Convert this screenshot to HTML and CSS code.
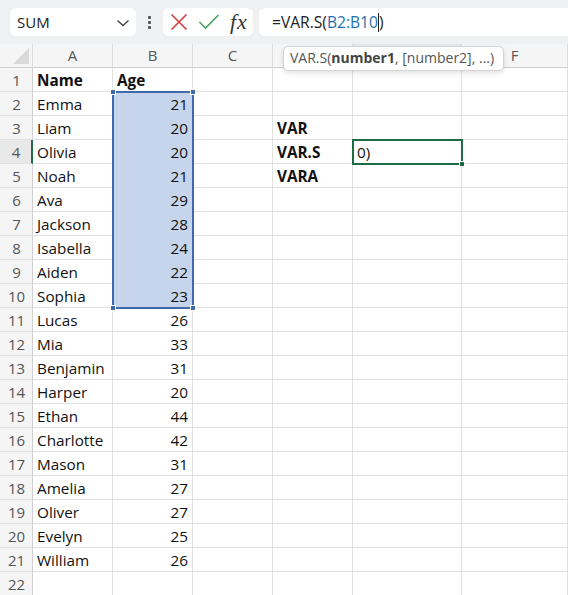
FILE: index.html
```html
<!DOCTYPE html>
<html>
<head>
<meta charset="utf-8">
<link rel="stylesheet" href="styles.css">
</head>
<body>
<div class="toolbar">
  <div class="namebox"><span class="nb-text">SUM</span>
    <svg class="chev" width="14" height="8" viewBox="0 0 14 8"><path d="M1.5 1.5 L7 6.5 L12.5 1.5" fill="none" stroke="#444" stroke-width="1.4"/></svg>
  </div>
  <div class="dots"><span></span><span></span><span></span></div>
  <div class="fxbox">
    <svg class="ico" width="18" height="18" viewBox="0 0 18 18"><path d="M1.5 1.5 L16.5 16.5 M16.5 1.5 L1.5 16.5" stroke="#d83b3b" stroke-width="1.6" fill="none"/></svg>
    <svg class="ico" width="22" height="18" viewBox="0 0 22 18"><path d="M1.5 9 L7.5 15 L20.5 2" stroke="#48a061" stroke-width="1.6" fill="none"/></svg>
    <span class="fx">fx</span>
  </div>
  <div class="formula"><span>=VAR.S(</span><span class="ref">B2:B10</span><span class="caret"></span><span>)</span></div>
</div>
<div class="sheet">
  <div class="grid">
    <div class="corner"></div><div class="ch">A</div><div class="ch">B</div><div class="ch">C</div><div class="ch"></div><div class="ch act"></div><div class="ch">F</div>

    <div class="rh">1</div><div class="c b">Name</div><div class="c b">Age</div><div class="c"></div><div class="c"></div><div class="c"></div><div class="c"></div>
    <div class="rh">2</div><div class="c">Emma</div><div class="c n sel">21</div><div class="c"></div><div class="c"></div><div class="c"></div><div class="c"></div>
    <div class="rh">3</div><div class="c">Liam</div><div class="c n sel">20</div><div class="c"></div><div class="c b">VAR</div><div class="c"></div><div class="c"></div>
    <div class="rh act">4</div><div class="c">Olivia</div><div class="c n sel">20</div><div class="c"></div><div class="c b">VAR.S</div><div class="c">0)</div><div class="c"></div>
    <div class="rh">5</div><div class="c">Noah</div><div class="c n sel">21</div><div class="c"></div><div class="c b">VARA</div><div class="c"></div><div class="c"></div>
    <div class="rh">6</div><div class="c">Ava</div><div class="c n sel">29</div><div class="c"></div><div class="c"></div><div class="c"></div><div class="c"></div>
    <div class="rh">7</div><div class="c">Jackson</div><div class="c n sel">28</div><div class="c"></div><div class="c"></div><div class="c"></div><div class="c"></div>
    <div class="rh">8</div><div class="c">Isabella</div><div class="c n sel">24</div><div class="c"></div><div class="c"></div><div class="c"></div><div class="c"></div>
    <div class="rh">9</div><div class="c">Aiden</div><div class="c n sel">22</div><div class="c"></div><div class="c"></div><div class="c"></div><div class="c"></div>
    <div class="rh">10</div><div class="c">Sophia</div><div class="c n sel">23</div><div class="c"></div><div class="c"></div><div class="c"></div><div class="c"></div>
    <div class="rh">11</div><div class="c">Lucas</div><div class="c n">26</div><div class="c"></div><div class="c"></div><div class="c"></div><div class="c"></div>
    <div class="rh">12</div><div class="c">Mia</div><div class="c n">33</div><div class="c"></div><div class="c"></div><div class="c"></div><div class="c"></div>
    <div class="rh">13</div><div class="c">Benjamin</div><div class="c n">31</div><div class="c"></div><div class="c"></div><div class="c"></div><div class="c"></div>
    <div class="rh">14</div><div class="c">Harper</div><div class="c n">20</div><div class="c"></div><div class="c"></div><div class="c"></div><div class="c"></div>
    <div class="rh">15</div><div class="c">Ethan</div><div class="c n">44</div><div class="c"></div><div class="c"></div><div class="c"></div><div class="c"></div>
    <div class="rh">16</div><div class="c">Charlotte</div><div class="c n">42</div><div class="c"></div><div class="c"></div><div class="c"></div><div class="c"></div>
    <div class="rh">17</div><div class="c">Mason</div><div class="c n">31</div><div class="c"></div><div class="c"></div><div class="c"></div><div class="c"></div>
    <div class="rh">18</div><div class="c">Amelia</div><div class="c n">27</div><div class="c"></div><div class="c"></div><div class="c"></div><div class="c"></div>
    <div class="rh">19</div><div class="c">Oliver</div><div class="c n">27</div><div class="c"></div><div class="c"></div><div class="c"></div><div class="c"></div>
    <div class="rh">20</div><div class="c">Evelyn</div><div class="c n">25</div><div class="c"></div><div class="c"></div><div class="c"></div><div class="c"></div>
    <div class="rh">21</div><div class="c">William</div><div class="c n">26</div><div class="c"></div><div class="c"></div><div class="c"></div><div class="c"></div>
    <div class="rh">22</div><div class="c"></div><div class="c"></div><div class="c"></div><div class="c"></div><div class="c"></div><div class="c"></div>
  </div>
  <div class="selection"><i class="h tl"></i><i class="h tr"></i><i class="h bl"></i><i class="h br"></i></div>
  <div class="active"><i class="fill"></i></div>
  <div class="tip">VAR.S(<b>number1</b>, [number2], ...)</div>
</div>
</body>
</html>
```
FILE: styles.css
```css
* { box-sizing: border-box; }
html, body { margin: 0; padding: 0; background: #fff; overflow: hidden; }
body { width: 568px; height: 595px; font-family: "Open Sans", "Noto Sans", sans-serif; }

.toolbar {
  height: 44px;
  background: #eff0f2;
  display: flex;
  align-items: center;
  padding-left: 10px;
}
.namebox {
  width: 126px; height: 28px;
  background: #fff; border-radius: 6px;
  display: flex; align-items: center; justify-content: space-between;
  padding: 0 6px 0 7px;
  font-size: 15px; color: #222;
}
.chev { margin-top: 2px; }
.dots {
  width: 27px; height: 28px;
  display: flex; flex-direction: column; align-items: center; justify-content: center; gap: 2px;
}
.dots span { width: 3px; height: 3px; background: #555; border-radius: 1px; }
.fxbox {
  width: 90px; height: 28px;
  background: #fff; border-radius: 6px;
  display: flex; align-items: center;
  padding-left: 7px; gap: 10px;
}
.fx {
  font-family: "Liberation Serif", "DejaVu Serif", serif;
  font-style: italic; font-size: 22px; color: #333;
  line-height: 1; letter-spacing: 1px;
}
.formula {
  flex: 1; height: 28px;
  margin-left: 6px; margin-right: -8px;
  background: #fff; border-radius: 6px;
  display: flex; align-items: center;
  padding-left: 13px;
  font-size: 15.6px; color: #222;
}
.formula .ref { color: #1f6fad; }
.caret { width: 1px; height: 19px; background: #222; }

.sheet { position: relative; }
.grid {
  display: grid;
  grid-template-columns: 33px 80px 80px 80px 80px 109px 1fr;
  grid-template-rows: 24px;
  grid-auto-rows: 24px;
}
.corner, .ch, .rh { background: #f5f5f5; color: #555; font-size: 15px; }
.corner {
  border-right: 1px solid #dcdcdc; border-bottom: 1px solid #d0d0d0;
  position: relative;
}
.corner::after {
  content: ""; position: absolute; right: 3px; bottom: 3px;
  width: 0; height: 0;
  border-left: 16px solid transparent; border-bottom: 16px solid #dadada;
}
.ch {
  display: flex; align-items: center; justify-content: center;
  border-right: 1px solid #dcdcdc; border-bottom: 1px solid #d0d0d0;
  padding-bottom: 1px;
}
.ch.act { background: #e9e9e9; border-bottom: 2px solid #1e6b45; }
.rh {
  display: flex; align-items: center; justify-content: center;
  border-right: 1px solid #d0d0d0; border-bottom: 1px solid #e0e0e0;
  padding-left: 1px; padding-top: 1px;
}
.rh.act { background: #e9e9e9; border-right: 2px solid #1e6b45; }
.c {
  border-right: 1px solid #e1e1e1; border-bottom: 1px solid #e1e1e1;
  font-size: 15.3px; color: #111;
  padding: 1px 4px 0; line-height: 23px;
  white-space: nowrap; overflow: visible;
}
.c.b { font-weight: 700; }
.c.n { text-align: right; }
.c.sel { background: #c6d4ec; border-color: #c6d4ec; }

.selection {
  position: absolute; left: 112px; top: 47px; width: 82px; height: 218px;
  border: 2px solid #3e6aa9;
}
.h {
  position: absolute; width: 6px; height: 6px; background: #3e6aa9; border: 1px solid #fff;
}
.h.tl { left: -4px; top: -4px; }
.h.tr { right: -4px; top: -4px; }
.h.bl { left: -4px; bottom: -4px; }
.h.br { right: -4px; bottom: -4px; }

.active {
  position: absolute; left: 352px; top: 95px; width: 111px; height: 26px;
  border: 2px solid #1e6b45;
}
.fill {
  position: absolute; right: -4px; bottom: -4px; width: 6px; height: 6px;
  background: #1e6b45; border: 1px solid #fff;
}

.tip {
  position: absolute; left: 283px; top: 2px; width: 221px; height: 25px;
  background: #fff; border: 1px solid #d4d4d4; border-radius: 5px;
  box-shadow: 0 2px 5px rgba(0,0,0,0.12);
  font-size: 14px; color: #555;
  padding-left: 6px; line-height: 22px; white-space: nowrap;
}
.tip b { font-weight: 700; color: #444; }
```
